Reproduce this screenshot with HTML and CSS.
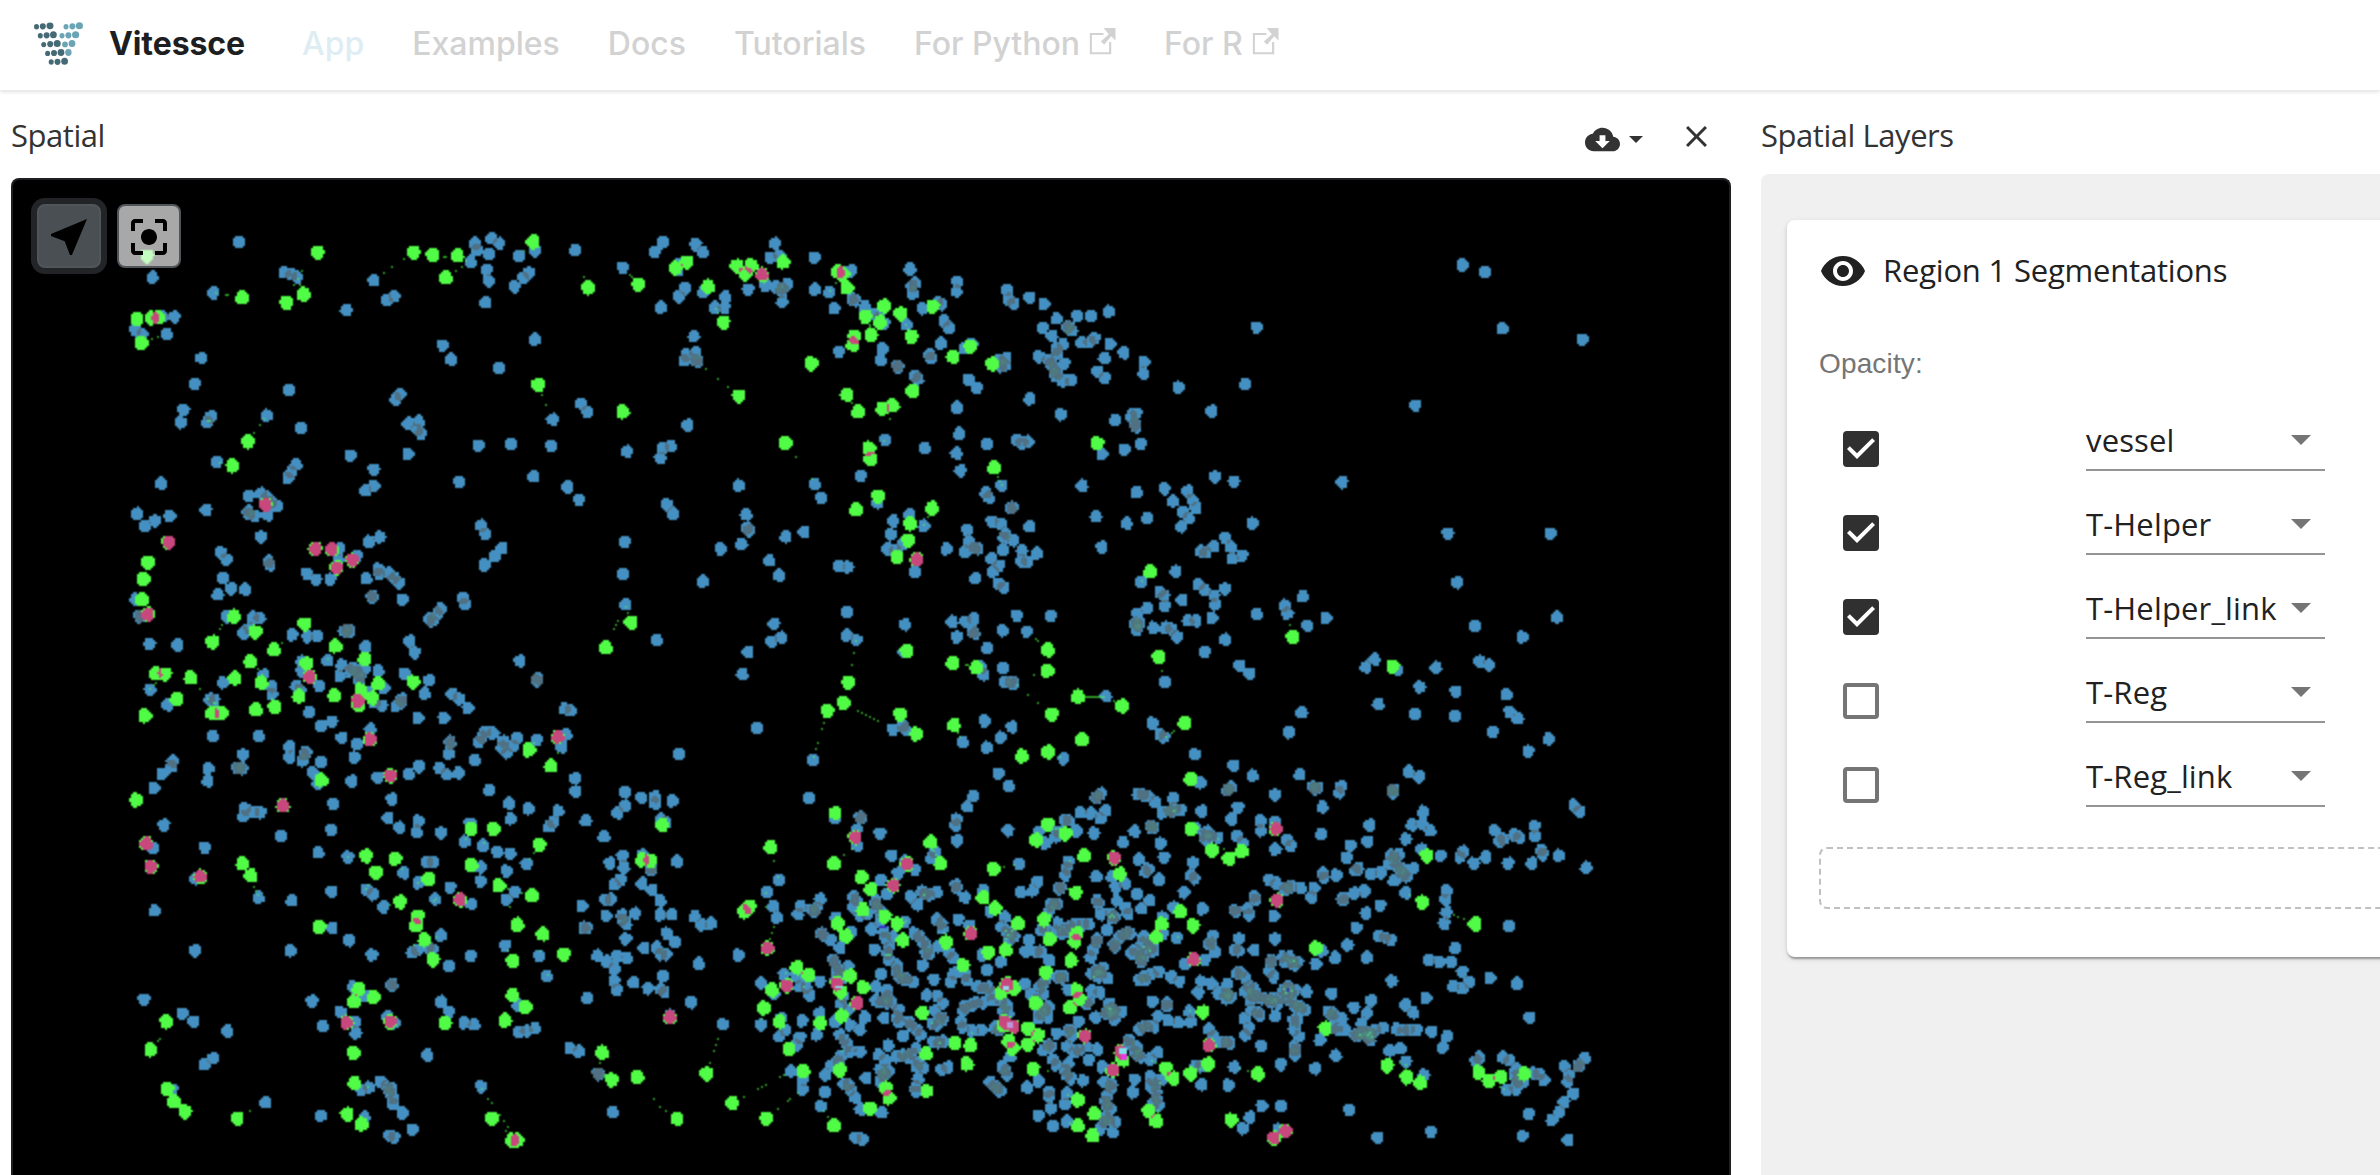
FILE: index.html
```html
<!DOCTYPE html>
<html lang="en">
<head>
<meta charset="utf-8">
<title>Vitessce</title>
<link rel="stylesheet" href="styles.css">
</head>
<body>
<header class="navbar">
  <a class="brand">
    <svg class="logo" viewBox="0 0 52 46">
      <g fill="#456a76">
        <ellipse cx="3.5" cy="5.8" rx="2.5" ry="2.7"/><ellipse cx="9.8" cy="5.3" rx="3" ry="3.1"/><ellipse cx="17" cy="4.8" rx="3.5" ry="3.4"/>
        <ellipse cx="7.3" cy="14.8" rx="2.5" ry="2.7"/><ellipse cx="13.6" cy="14.3" rx="3" ry="3.1"/><ellipse cx="20.4" cy="13.7" rx="3.4" ry="3.5"/>
        <ellipse cx="10.7" cy="23.6" rx="2.5" ry="2.7"/><ellipse cx="17.2" cy="23.1" rx="3" ry="3.1"/><ellipse cx="24.2" cy="22.6" rx="3.5" ry="3.5"/>
        <ellipse cx="14.6" cy="32.4" rx="2.5" ry="2.7"/><ellipse cx="21" cy="32" rx="3" ry="3.1"/><ellipse cx="28" cy="31.5" rx="3.4" ry="3.4"/>
        <ellipse cx="18.2" cy="41" rx="2.5" ry="2.7"/><ellipse cx="24.5" cy="40.8" rx="3" ry="3.1"/><ellipse cx="31.6" cy="40.3" rx="3.4" ry="3.5"/>
      </g>
      <g fill="#6ba5b5">
        <ellipse cx="33" cy="5.8" rx="2.5" ry="2.7"/><ellipse cx="39.4" cy="5.3" rx="3" ry="3.1"/><ellipse cx="46.4" cy="4.8" rx="3.6" ry="3.5"/>
        <ellipse cx="29" cy="14.8" rx="2.5" ry="2.7"/><ellipse cx="35.4" cy="14.3" rx="3" ry="3.1"/><ellipse cx="42.6" cy="13.7" rx="3.6" ry="3.5"/>
        <ellipse cx="32" cy="23.4" rx="2.9" ry="2.9"/><ellipse cx="39" cy="22.6" rx="3.4" ry="3.5"/><ellipse cx="35.4" cy="31.5" rx="3.2" ry="3.4"/>
      </g>
    </svg>
    <span class="brand-name">Vitessce</span>
  </a>
  <nav class="links">
    <a class="link active">App</a>
    <a class="link">Examples</a>
    <a class="link">Docs</a>
    <a class="link">Tutorials</a>
    <a class="link">For Python<svg class="external" viewBox="0 0 24 24"><path d="M13.3 4.4H1.2v19h19v-11h-1.9v9.1H3V6.2h10.3zM13.5 0H24v11.2l-3.8-3.8-6.3 7.4-2.9-2.8 7-6.4z"/></svg></a>
    <a class="link">For R<svg class="external" viewBox="0 0 24 24"><path d="M13.3 4.4H1.2v19h19v-11h-1.9v9.1H3V6.2h10.3zM13.5 0H24v11.2l-3.8-3.8-6.3 7.4-2.9-2.8 7-6.4z"/></svg></a>
  </nav>
</header>
<main class="workspace">
  <section class="spatial">
    <div class="title-bar">
      <h2 class="title">Spatial</h2>
      <div class="actions">
        <svg class="cloud" viewBox="0 0 24 24"><path d="M19.35 10.04C18.67 6.59 15.64 4 12 4 9.11 4 6.6 5.64 5.35 8.04 2.34 8.36 0 10.91 0 14c0 3.31 2.69 6 6 6h13c2.76 0 5-2.24 5-5 0-2.64-2.05-4.78-4.65-4.96zM17 13l-5 5-5-5h3V9h4v4h3z"/></svg>
        <svg class="caret" viewBox="0 0 14 7"><path d="M0 0h14L7 7z"/></svg>
        <svg class="close" viewBox="5 5 14 14"><path d="M19 6.41L17.59 5 12 10.59 6.41 5 5 6.41 10.59 12 5 17.59 6.41 19 12 13.41 17.59 19 19 17.59 13.41 12z"/></svg>
      </div>
    </div>
    <div class="viewer">
      <canvas class="scene" id="scene" width="860" height="500"></canvas>
      <div class="tools">
        <div class="tool selected"><svg viewBox="0 0 24 24"><path d="M21 3L3 10.53v.98l6.84 2.65L12.48 21h.98L21 3z"/></svg></div>
        <div class="tool"><svg viewBox="0 0 24 24"><path d="M12 8c-2.21 0-4 1.79-4 4s1.79 4 4 4 4-1.79 4-4-1.79-4-4-4zm-7 7H3v4c0 1.100.9 2 2 2h4v-2H5v-4zM5 5h4V3H5c-1.100 0-2 .9-2 2v4h2V5zm14-2h-4v2h4v4h2V5c0-1.100-.9-2-2-2zm0 16h-4v2h4c1.100 0 2-.9 2-2v-4h-2v4z"/></svg></div>
      </div>
    </div>
  </section>
  <section class="layers">
    <h2 class="title">Spatial Layers</h2>
    <div class="layers-body">
      <div class="card">
        <div class="card-head">
          <svg class="eye" viewBox="0 0 24 24"><path d="M12 4.500C7 4.500 2.730 7.610 1 12c1.730 4.390 6 7.500 11 7.500s9.270-3.110 11-7.500c-1.730-4.390-6-7.500-11-7.500zM12 17c-2.760 0-5-2.240-5-5s2.240-5 5-5 5 2.240 5 5-2.240 5-5 5zm0-8c-1.660 0-3 1.340-3 3s1.340 3 3 3 3-1.340 3-3-1.340-3-3-3z"/></svg>
          <span class="card-title">Region 1 Segmentations</span>
        </div>
        <div class="opacity">Opacity:</div>
        <div class="channels">
          <div class="channel"><span class="box checked"><svg viewBox="3 3 18 18"><path d="M10 17l-5-5 1.410-1.410L10 14.170l7.590-7.590L19 8l-9 9z"/></svg></span><div class="select">vessel<i></i></div></div>
          <div class="channel"><span class="box checked"><svg viewBox="3 3 18 18"><path d="M10 17l-5-5 1.410-1.410L10 14.170l7.590-7.590L19 8l-9 9z"/></svg></span><div class="select">T-Helper<i></i></div></div>
          <div class="channel"><span class="box checked"><svg viewBox="3 3 18 18"><path d="M10 17l-5-5 1.410-1.410L10 14.170l7.590-7.590L19 8l-9 9z"/></svg></span><div class="select">T-Helper_link<i></i></div></div>
          <div class="channel"><span class="box"></span><div class="select">T-Reg<i></i></div></div>
          <div class="channel"><span class="box"></span><div class="select">T-Reg_link<i></i></div></div>
        </div>
        <div class="drop"></div>
      </div>
    </div>
  </section>
</main>
<script src="cells.js"></script>
</body>
</html>
```
FILE: styles.css
```css
* { box-sizing: border-box; }
body { margin: 0; width: 2380px; height: 1175px; overflow: hidden; background: #fff; display: flex; flex-direction: column; }
svg { display: block; flex: none; }
.navbar { flex: none; height: 90px; display: flex; align-items: center; padding: 0 0 3px 33px; font-family: Inter, "Liberation Sans", sans-serif; font-size: 32px; box-shadow: 0 2px 4px rgba(0,0,0,.12); position: relative; }
.brand { display: flex; align-items: center; width: 245px; }
.logo { width: 52px; height: 46px; }
.brand-name { margin-left: 24px; font-weight: 700; letter-spacing: -.1px; color: #1c1e21; }
.links { display: flex; }
.link { display: flex; align-items: center; padding: 0 24px; font-weight: 500; color: #d2d2d2; white-space: nowrap; }
.link.active { color: #deedf3; }
.external { width: 28px; height: 27px; margin: -4px 0 0 8px; fill: #d2d2d2; }
.workspace { flex: 1; display: flex; gap: 30px; min-height: 0; padding-left: 11px; font-family: "Open Sans", "Noto Sans", sans-serif; }
.title { margin: 0; font-size: 31px; font-weight: 400; line-height: 82px; height: 84px; flex: none; color: #333; padding-top: 4px; letter-spacing: -.45px; white-space: nowrap; }
.spatial { width: 1720px; display: flex; flex-direction: column; }
.title-bar { height: 88px; flex: none; display: flex; justify-content: space-between; }
.actions { display: flex; align-items: center; padding: 7px 24px 0 0; fill: #333; }
.cloud { width: 35px; height: 35px; margin-top: 3px; }
.caret { width: 14px; height: 7px; margin: 4px 43px 0 9px; }
.close { width: 21px; height: 21px; margin-top: -3px; }
.viewer { flex: 1; position: relative; overflow: hidden; background: #000; border: 2px solid #1d1f22; border-bottom: 0; border-radius: 8px 8px 0 0; }
.scene { position: absolute; left: -2px; top: -2px; width: 1720px; height: 1000px; }
.tools { position: absolute; left: 24px; top: 24px; display: flex; gap: 16px; }
.tool { width: 64px; height: 64px; border: 2px solid #50555a; border-radius: 8px; background: rgba(255,255,255,.66); display: flex; align-items: center; justify-content: center; }
.tool svg { width: 48px; height: 48px; margin-top: 2px; }
.tool.selected { background: #4a4f53; box-shadow: 0 0 0 6px #232428; }
.layers { flex: 1; min-width: 0; display: flex; flex-direction: column; }
.layers-body { flex: 1; background: #f0f0f0; border-radius: 8px 0 0 0; padding: 46px 0 0 26px; }
.card { height: 737px; width: 700px; background: #fff; border-radius: 8px; padding: 27px 0 0 32px; box-shadow: 0 4px 2px -2px rgba(0,0,0,.2), 0 2px 2px rgba(0,0,0,.14), 0 2px 6px rgba(0,0,0,.12); color: #212121; display: flex; flex-direction: column; }
.card-head { height: 48px; flex: none; display: flex; align-items: center; }
.eye { width: 48px; height: 48px; fill: #212121; }
.card-title { margin: -3px 0 0 16px; font-size: 31px; letter-spacing: -.2px; white-space: nowrap; }
.opacity { margin-top: 53px; font: 28px/32px "Liberation Sans", Arial, sans-serif; letter-spacing: .15px; color: #757575; }
.channels { margin-top: 27px; }
.channel { height: 84px; display: flex; padding-left: 24px; }
.box { width: 36px; height: 36px; margin-top: 24px; border: 4px solid #757575; border-radius: 4px; }
.box.checked { border: 0; background: #303030; }
.box svg { width: 36px; height: 36px; fill: #fff; }
.select { width: 239px; height: 64px; margin-left: 207px; border-bottom: 2px solid #949494; font-size: 31px; line-height: 66px; letter-spacing: .15px; white-space: nowrap; position: relative; }
.select i { position: absolute; right: 14px; top: 28px; border: 10px solid transparent; border-top-color: #757575; border-bottom: 0; }
.drop { width: 640px; height: 62px; flex: none; margin-top: 20px; border: 2px dashed #c0c0c0; border-radius: 8px; }
```
FILE: cells.js
```js
// Cell centroids grouped by tile. at: tile origin, k: units per pixel.
// cells = segmented cells, helper = T-Helper, dense = doubly segmented T-Helper, link = link samples.
const tiles = [
{at:[100,200],k:[2.8,3],
cells:"390,126 147,232 517,217 536,224 551,232 316,279 767,241 803,301 824,289 690,331 174,350 208,350 99,391 118,402 186,402 1051,130 1056,150 1038,185 1096,114 1117,130 1090,162 1083,209 1088,243 1079,308 1173,168 1218,151 1202,219 1185,234 1161,260 1331,150 1464,202 960,436 983,478 1117,504 1218,418 284,474 265,552 529,570 234,630 226,667 311,650 300,666 467,647 562,684 840,583 829,598 863,670 892,664 889,690 899,701 862,761 702,767 767,809 767,857 744,870 1060,737 1151,732 1267,658 1347,611 1365,636 1264,738 1475,754 1213,829 1308,861 1341,899 1006,846 327,786 549,794 536,816 527,834 170,850 416,888 451,881 467,892 478,906 495,918 415,934 417,942 433,947 470,945 297,930 104,941 126,978 154,963 195,948 451,1010 339,1057 355,1078 472,1084 476,1094 344,1134 330,1184 366,1166 406,1168 100,1198 110,1249 114,1249 669,1045 667,1078 718,1068 579,1120 605,1140 645,1137 754,1025 783,1011 746,1136 779,1108 782,1122 808,1120 823,1133 836,1148 761,1187 762,1191 847,1199 1067,977 1078,1001 1126,1043 1104,1068 1077,1095 1469,1026 1465,1122 1472,1214 1017,1194 1022,1213 955,1226 945,1240 931,1262 922,1257 355,1250 428,1252 447,1254 419,1285 400,1299 139,1331 216,1335 538,1304 581,1310 609,1308 691,1291 699,1294 684,1293 744,1340 867,1323 881,1358 637,1380 565,1385 677,1395 1176,1383",
helper:"132,168 609,157 877,157 932,165 1000,167 1212,126 968,234 1367,263 1508,253 398,293 570,283 523,307 104,357 146,354 164,353 116,428 1226,555 1464,636 414,725 371,797 134,1089 122,1137 117,1197 375,1250 435,1296 315,1326 573,1272 487,1350 659,1338 742,1378 422,1385 579,1391 1487,1267 1416,1342",
dense:"463,914 192,1027 603,1047 649,1048 706,1080 663,1103 134,1243",
link:"324,279 352,285 358,285 565,213 553,238 543,255 560,255 795,218 817,201 851,177 963,171 968,171 997,213 1013,201 1025,183 1187,153 1355,231 1484,225 1489,230 145,417 162,411 1238,585 1249,615 459,656 448,675 431,699 335,789 302,660 306,662 1470,1220 1478,1239 1450,1262 1445,1275 1439,1287 342,1275 336,1287 509,1329 638,1377"},
{at:[640,200],k:[2.8,3],
cells:"65,127 41,156 156,133 175,157 377,130 365,173 391,168 489,173 590,212 110,190 106,210 126,265 110,290 59,322 178,277 238,290 209,323 236,323 303,268 351,257 381,260 398,265 413,252 398,305 397,275 489,268 531,276 543,325 594,297 601,301 629,320 656,345 671,352 684,370 746,374 756,208 769,250 762,258 765,280 888,245 886,273 791,325 833,306 845,313 852,363 865,383 842,430 811,463 815,474 930,432 908,445 1027,270 1034,298 1045,310 1091,293 1131,312 1167,356 1127,384 1154,408 1201,381 1209,392 1196,381 1225,347 1262,348 1313,335 1236,427 1272,415 1260,426 1317,432 1355,458 1300,474 1184,433 1167,447 1168,462 1118,470 1143,480 1150,492 1160,508 1188,490 1168,520 1162,525 1184,543 1208,540 1281,515 1301,534 1411,485 1410,520 151,408 131,465 124,480 154,458 158,482 161,485 557,455 679,445 674,480 721,497 722,501 770,528 778,537 920,538 942,564 1025,475 1008,480 1022,497 1012,500 1091,597 1179,643 1509,562 1330,661 1376,647 1389,641 1386,673 1389,680 1402,731 1357,749 1294,762 887,623 894,701 886,760 797,744 897,812 972,731 1055,719 1070,730 1087,725 688,720 134,676 86,738 64,744 57,774 277,857 489,852 507,894 618,828 1013,857 75,914 92,941 298,944 300,985 305,992 285,1032 227,1047 408,1011 459,996 361,1082 389,1126 177,1144 556,1098 582,1101 664,908 755,942 708,963 795,977 702,1003 735,1035 691,1047 715,1050 770,1116 859,1047 968,877 976,892 1038,924 1044,922 985,965 1010,971 1090,979 917,990 922,1024 910,1055 937,1044 945,1046 1024,1000 1019,1014 1045,1021 1016,1049 1070,1051 1112,1060 1068,1083 1085,1086 985,1077 1005,1096 988,1115 1003,1150 1019,1162 939,1134 1238,857 1277,948 1293,1041 1362,970 1421,954 1390,877 1468,866 1492,903 580,1236 375,1272 395,1313 368,1325 303,1357 47,1320 580,1306 606,1320 741,1274 738,1356 874,1265 912,1266 933,1257 932,1296 936,1300 888,1311 1055,1246 1150,1248 1016,1292 1084,1294 973,1345 956,1403 1017,1403",
helper:"131,186 100,204 271,198 312,197 295,221 401,186 191,260 233,367 553,215 568,222 580,263 683,318 631,350 672,367 729,341 646,405 760,411 820,319 601,410 596,433 480,491 277,588 580,584 611,636 679,626 708,617 763,573 925,440 877,470 986,492 407,730 641,745 646,777 1280,730 992,804 667,889 605,930 818,925 757,971 751,1022 719,1071 747,1352 876,1390 942,1403 1142,1350 1140,1412",
dense:"342,224 775,1078",
link:"346,240 348,250 212,327 217,338 185,507 218,537 246,561 548,249 534,272 746,374 751,386 643,373 643,380 595,608 700,657 683,722 437,771 482,837 1002,830 1008,843 1014,855 806,951 795,975 604,1322 599,1358 593,1394 1109,1317 1114,1323 913,1394 918,1394 1103,1424"},
{at:[1100,240],k:[2.8,3],
cells:"1016,75 1078,96 439,262 1127,265 1350,300 406,433 313,514 882,496 322,711 375,726 246,754 258,780 269,804 231,816 249,834 226,860 678,727 428,850 350,893 367,921 283,934 296,936 318,919 371,955 398,948 974,881 1261,881 1000,1027 212,995 115,1026 168,1056 180,1067 181,1098 132,1104 229,1080 276,1033 292,1049 350,1047 319,1067 323,1094 105,1122 98,1150 111,1150 103,1170 104,1155 150,1163 184,1163 200,1167 215,1190 247,1142 269,1142 314,1134 351,1199 293,1236 439,1122 517,1097 525,1120 568,1070 580,1157 633,1134 391,1278 418,1301 1279,1131 1050,1158 1182,1191 768,1258 745,1281 833,1288 941,1283 895,1341 996,1354 1062,1263 1088,1275 1138,1363 1147,1415 1170,1435 779,1392 882,1422 994,1428 1100,1476 181,1326 565,1416 530,1477 1257,1497 146,1450 168,1483 179,1491",
helper:"141,996 165,1251 540,1191 820,1279 62,1398 237,1450",
link:"117,1023 531,1155 173,1293 39,1383 185,1491 201,1479 207,1473 2,1371 8,1371"},
{at:[100,660],k:[2.8,3],
cells:"140,90 189,135 345,68 457,45 308,118 320,120 480,80 482,102 565,35 614,77 550,78 560,90 690,22 672,48 685,18 709,25 720,36 741,28 728,62 728,52 700,32 779,33 795,84 752,95 769,128 789,137 852,40 921,61 909,100 845,118 830,138 845,125 586,156 619,198 650,184 757,208 677,234 719,252 713,292 530,260 531,292 577,276 571,284 568,302 619,306 595,337 610,370 705,363 778,353 817,417 864,342 893,319 891,174 963,174 985,102 1005,116 1030,144 1225,57 1224,62 1302,146 1317,151 315,228 444,228 400,285 384,324 391,324 398,325 303,324 302,363 203,304 200,320 174,342 152,384 406,446 400,470 429,456 449,457 179,495 506,528 293,562 149,564 266,656 444,712 537,722 611,578 694,591 648,510 654,432 807,474 837,502 891,483 886,515 955,519 648,695 745,689 764,703 792,741 850,638 891,669 916,606 933,606 939,717 981,682 1040,732 1021,545 1036,490 1072,557 1113,576 1148,582 1194,612 1066,621 1066,663 1139,633 1161,695 1139,719 154,752 265,872 123,1018 534,872 649,804 697,841 761,885 874,878 888,870 920,864 931,868 955,826 977,918 1038,887 1135,856 1230,888 1251,948 818,972 818,977 594,1023 623,1098 710,980 743,1008 673,1056 715,1085 716,1119 804,1070 824,1088 955,1025 977,1055 1020,1088 1048,1094 1171,1037 1172,1115 1194,1113 1218,1105 231,1060 262,1085 356,1113 317,1195 293,1214 202,1288 463,1327 916,1185 731,1290 754,1282 785,1264 802,1280 815,1285 810,1296 821,1315 821,1332 848,1359 875,1408 740,1372 619,1367 810,1427 824,1432 1068,1280 1316,1163 1341,1174 1394,1240 1395,1243 1435,1356 1364,1015 980,245 981,250 977,280 1080,215 1070,232 1060,246 1102,220 1130,245 1125,262 1140,278 1167,234 1157,258 1223,240 1305,225 1293,261 1049,300 951,324 971,343 1005,339 1330,355 1332,396 1090,390 1145,430 1150,477 1201,446 1282,453 1269,486 1257,500 1360,482 1411,530 1469,397 1469,437 1450,458 1515,413 1428,609 1463,587 1467,622 1458,658 1440,672 1518,670 1415,718 1430,718 1349,737 1355,803 1363,804 1417,767 1462,765 1463,778 1473,792 1497,760 1472,836 1393,887 1421,905 1447,887 1476,895 1441,925 1440,962 1446,990 1495,967",
helper:"155,41 182,42 254,54 377,54 452,68 215,117 126,168 314,160 340,160 436,149 490,141 557,109 657,107 877,66 779,72 730,90 724,135 762,113 620,360 102,420 1201,270 1263,318 1103,508 1038,507 400,611 422,647 745,587 826,596 772,637 919,656 840,725 1039,616 1117,677 1210,705 1230,554 890,768 885,796 614,800 909,840 932,899 1168,794 1240,822 1298,882 1156,903 1155,1006 1191,1040 1134,1081 966,1089 724,987 767,1010 711,1025 186,1085 142,1170 711,1179 188,1287 208,1325 238,1355 384,1376 713,1270 692,1362 733,1393 1098,1376 1154,1441 1168,1441 1406,1178 1433,1259 1504,1252",
dense:"587,51 722,122 756,238 1282,231 813,347 512,437 130,551 143,620 281,650 1008,719 691,1088 813,1085",
link:"280,87 150,75 140,87 156,69 303,117 320,126 325,130 444,27 481,117 604,345 694,591 1282,279 1215,249 1204,597 1215,579 1024,537 1075,549 847,627 891,669 745,687 751,677 811,735 933,723 939,717 431,681 436,690 442,705 1143,687 1180,699 1148,741 1142,873 1232,873 1254,945 878,852 940,830 162,1143 168,1137 420,1353 751,1281 730,1370 1070,1287 1087,1317 1098,1329 1120,1365 1131,1383 1142,1401 1137,1413 1400,1209 1411,1250"},
{at:[640,660],k:[3,3],
cells:"307,43 351,204 117,282 519,300 758,208 789,198 795,207 1030,44 1090,23 1095,66 1112,67 1122,69 1398,108 1035,183 1116,201 1083,232 1040,263 968,246 1271,296 1076,341 1107,379",
helper:"626,68 611,129 563,153 781,162 829,222 1314,110 941,195 1235,162 1146,289 1224,276 1326,239",
link:"636,15 653,153 666,159 678,165 690,171 702,177 714,183 552,189 546,207 534,249 528,267 522,291 1182,45 1164,105 1194,129 1132,75 953,219 960,231 1260,291 1339,111 1345,111 1351,111 1357,111 1363,111 1369,111 1375,111 1381,111 1387,111 1393,111"},
{at:[1110,660],k:[3,3],
cells:"255,283 272,369 372,317 428,347 570,344 896,335 926,350 1149,216 1255,273 1317,236",
helper:"243,357"},
{at:[640,780],k:[3,3],
cells:"4,54 44,50 46,70 97,63 507,54 63,118 76,128 8,225 33,265 34,270 111,244 10,312 36,331 61,363 61,405 95,403 81,460 105,486 12,503 50,503 62,523 78,523 176,551 68,588 24,625 62,627 72,636 153,667 90,707 249,733 296,525 164,410 184,435 212,430 417,300 380,336 400,378 411,412 586,113 660,111 665,113 720,161 650,150 651,196 755,228 794,244 825,269 774,279 722,300 741,342 708,363 641,350 648,359 640,381 541,357 482,378 474,402 513,388 522,394 530,385 542,460 547,464 572,480 633,457 600,503 588,413 580,540 583,545 660,405 680,402 708,372 712,385 725,400 720,425 694,447 732,455 736,475 757,470 795,425 703,508 746,505 743,520 748,540 772,556 823,460 838,470 848,485 860,500 858,520 866,522 892,500 848,556 812,350 845,335 855,342 866,345 890,336 833,374 948,315 950,325 974,352 947,135 950,118 952,182 981,80 1000,48 1106,20 1104,151 1138,251 1193,306 1178,333 1142,336 886,216 875,234 1030,330 1050,395 1094,412 890,418 905,430 908,445 954,418 989,437 1083,440 1100,455 1115,460 1122,470 1108,480 928,518 940,535 1026,525 1041,570 1083,545 1167,480 1157,515 1190,515 1203,515 1229,540 1285,245 1280,265 1276,285 1262,322 1256,326 1233,375 1243,372 1252,372 1226,396 1197,155 1217,190 1245,170 1255,155 1274,120 1285,122 1311,153 1320,97 432,583 470,590 498,622 480,620 508,645 540,606 364,609 402,642 363,735 625,560 590,575 588,600 600,570 610,590 722,582 775,590 790,596 800,596 820,606 770,575 707,620 742,630 740,650 707,662 725,665 740,668 755,668 732,714 775,690 772,710 775,725 805,725 812,735 830,750 842,765 675,711 789,768 882,598 942,580 932,606 975,585 980,600 860,645 892,648 908,670 884,693 903,712 908,718 878,730 890,735 608,650 604,670 625,690 585,725 630,735 660,748 600,765 612,780 622,795 602,830 595,845 575,855 556,885 660,816 630,815 540,700 487,722 530,765 425,715 436,750 416,770 480,772 470,795 453,873 488,898 488,928 543,979 555,936 612,912 625,915 630,928 645,952 661,988 725,998 647,1072 668,1078 678,893 720,870 735,880 728,885 747,872 722,905 716,824 745,797 735,840 770,830 790,825 800,832 815,820 828,805 835,845 830,860 850,863 835,895 828,920 828,935 880,785 898,788 910,785 903,869 923,862 1012,620 1030,625 1045,622 1055,640 1060,660 1085,665 1100,675 1090,690 1104,700 975,680 995,675 1010,668 1030,668 970,690 964,725 970,742 996,752 1026,750 1065,742 1075,750 1080,745 1110,830 1088,860 1097,872 1100,885 1050,906 1062,918 1072,925 1082,932 1161,922 1197,903 1156,612 1172,640 1200,620 1210,610 1220,595 1208,640 1190,660 1205,680 1215,690 1200,700 1195,715 1222,712 1225,680 1255,590 1262,595 1270,590 1284,630 1250,760 1290,750 1295,770 1284,755 1315,725 1210,810 1225,795 1232,800 1240,840 1248,855 1280,800 1305,815 1318,810 1276,870 1285,850 1280,885 1292,895 1227,935 1228,950 1233,985 1195,1007 1239,1038 1280,1024 1275,972 1282,940 1255,430 1275,450 1270,460 1290,440 1305,432 1245,455 1215,445 1205,450",
helper:"66,134 32,241 6,240 392,202 586,99 582,250 328,380 313,395 665,291 693,328 669,389 735,409 593,431 771,431 618,469 788,480 872,186 902,251 1061,267 1223,132 1277,161 1188,180 1307,339 1029,353 1066,384 1134,430 1212,418 1229,477 1310,461 1304,485 919,486 1046,517 1097,510 969,556 1293,541 1217,576 471,563 506,586 395,630 372,684 418,725 540,729 446,807 605,708 630,588 602,636 669,622 846,700 945,788 992,797 858,822 981,852 1187,670 1310,630 1318,658 1290,683 1090,735 1165,745 1195,766 1163,794 1107,783 1119,805 1122,625 1083,638 1179,866 490,873 599,870 738,924 747,954 860,933 690,986 582,1035 380,1015 276,970 199,881 112,1017 1314,960 1314,1038",
dense:"645,172 801,252 760,317 383,504 440,617 590,610 651,669 992,460 90,712 1100,612 1095,725 1120,740",
link:"402,243 414,291 378,339 378,381 612,225 637,207 402,440 396,459 390,477 234,777 228,795 222,813 210,849 432,885 420,891 378,915 366,921 354,927 312,951 450,957 444,963 414,987 474,937 551,992 564,1011 42,957 60,981 77,992 1092,261 1122,255 882,213 888,225 797,423 911,459 1098,453 1104,465 1116,453 1098,474 437,579 492,621 365,717 606,810 740,525 746,525 752,525 876,729 996,759 898,786 1222,873 1284,945 1289,1028 1290,243 1248,147 850,342 1284,327"},
{at:[1080,780],k:[2.904,3],
cells:"5,97 33,100 59,115 75,90 50,50 60,40 46,54 40,160 158,154 125,187 172,238 47,288 92,290 130,310 104,322 165,342 202,362 190,275 198,268 229,299 245,232 235,190 207,138 214,143 208,142 50,362 54,370 108,362 134,385 139,402 178,385 60,403 90,400 95,415 100,410 168,43 183,43 197,48 218,66 270,55 240,98 262,92 275,85 292,90 265,95 353,93 350,10 427,30 438,22 432,28 459,82 439,117 566,45 704,81 335,145 360,165 370,155 380,168 365,180 400,172 456,168 472,190 525,123 526,152 565,125 600,180 612,198 568,208 701,162 758,20 752,38 675,20 690,22 682,25 909,28 908,38 908,32 997,95 964,135 994,132 1017,152 946,177 842,136 835,184 786,196 774,232 992,208 1047,228 1103,231 1113,215 1143,250 1178,232 1204,150 1218,184 1230,178 1260,165 1275,173 1320,139 1321,168 1340,210 1343,223 1312,250 1391,227 1470,263 1434,76 1450,94 1244,250 328,249 323,285 332,295 302,337 271,382 355,387 549,299 570,310 603,322 595,328 613,320 641,324 680,325 671,352 705,280 709,292 745,285 800,272 808,263 845,282 873,278 904,225 912,232 925,222 896,250 918,258 930,262 932,275 940,285 967,265 912,302 948,290 946,339 1064,333 1061,360 1064,398 1058,430 1245,438 762,354 765,360 796,340 827,333 872,376 831,400 802,444 506,350 510,360 487,385 490,405 449,390 452,394 563,409 867,468 885,472 902,478 777,495 742,533 834,532 703,513 685,552 567,477 461,477 449,510 462,512 505,510 386,467 375,492 380,490 392,516 362,540 304,552 281,474 10,433 25,433 78,450 125,463 135,458 112,475 145,460 98,495 102,500 185,470 180,490 200,490 210,500 160,510 150,520 175,525 190,520 212,515 178,545 180,540 50,478 48,485 38,510 30,532 240,412 240,460 35,580 50,570 62,578 52,590 80,595 65,565 555,540 555,545 590,530 605,530 595,545 620,545 632,545 622,555 550,572 562,590 455,580 465,578 480,595 905,603 1090,504 1014,540 1044,546 1079,546 1110,575 1131,606 1085,618 1110,625 1190,594 1269,611 1306,713 1005,654 945,675 968,699 795,682 846,662 833,698 731,641 657,635 229,574 210,582 185,590 172,598 190,600 265,590 288,604 352,604 383,611 343,638 428,612 400,638 425,640 430,645 422,655 440,650 490,620 505,625 480,635 500,645 515,650 495,660 530,655 545,660 560,655 555,668 580,655 575,670 600,655 615,665 590,630 602,625 612,640 605,620 625,630 625,680 640,685 635,678 655,690 498,690 515,698 522,705 478,715 490,745 480,765 568,708 620,720 630,722 622,748 637,770 622,800 625,810 625,825 210,665 252,670 252,678 318,694 322,725 226,710 215,740 195,740 185,740 172,748 258,722 286,728 35,632 58,638 25,665 20,672 85,670 90,685 75,700 80,695 95,705 100,690 120,695 100,718 45,712 375,748 385,770 412,787 425,788 435,788 526,797 720,695 735,700 732,708 760,715 735,745 745,748 770,750 697,779 819,730 800,765 815,760 805,768 830,755 845,765 840,760 835,772 858,750 842,780 880,743 919,747 940,750 955,750 978,750 1021,755 1066,768 1054,802 898,812 931,806 947,845 998,885 743,827 583,853 448,861 683,865 430,916 782,990 864,1072 1019,1055 1285,1068 1303,1002 1417,1080 1370,1020 1393,995 1406,967 1434,942 1150,843 1160,833 1228,832 1247,840 1265,868 1262,890 1270,905 1285,905 1280,885 1315,880 1333,882 1347,900 1240,930 1265,928 1407,858 1447,855 1448,860 1466,834 1421,885 1416,905 20,800 50,808 25,840 10,902 65,860 143,780 140,790 165,800 168,825 175,830 205,838 226,817 160,815 335,858 350,860 352,914 203,890 205,915 220,915 235,900 220,935 223,955 215,970 230,975 160,898 153,937 70,905 92,912 90,922 78,945 75,965 78,975 88,985 75,1010 70,1025 85,1020 102,1025 60,1045 95,1055 493,1012 473,1045 528,978 584,978 576,1048",
helper:"12,228 322,6 323,147 383,211 432,235 470,213 1007,227 995,366 1147,432 115,282 292,395 237,432 328,437 221,470 685,504 357,696 712,744 516,882 892,857 949,892 988,908 1158,876 1188,903 1222,890 1291,882 372,852 321,882 249,866 270,894 200,993 221,1023 439,1020 42,1000 37,1067 124,840",
dense:"100,234 569,147 571,361 330,538 14,768 375,796 95,870 563,1074 597,1053 118,815",
link:"418,207 401,178 958,345 1086,405 1097,410 1114,417 284,471 272,93 88,411 93,405 98,411 187,501 204,513 620,543 319,692 815,765 835,765 842,760 848,768 463,865 488,873 208,843 220,849 232,909 228,990 228,997 346,865 352,858 930,849 947,855 947,865 947,873 1220,921 1230,928 1248,897 42,590 85,686 595,625 605,635 613,632 598,640"}
];
const OX = 11, OY = 178, W = 860, H = 500;
const blue = new Uint8Array(W * H), green = new Uint8Array(W * H), dots = new Uint8Array(W * H);

// Stamp one rounded, slightly irregular cell; the outline depends on the position only.
function stamp(layer, x, y, r) {
  const s = Math.abs(Math.sin(x * 12.9 + y * 78.2) * 437) % 1;
  const x0 = Math.round(x), y0 = Math.round(y);
  for (let j = -5; j <= 4; j++) for (let i = -5; i <= 4; i++) {
    const dx = x0 + i + .5 - x, dy = y0 + j + .5 - y;
    const a = Math.atan2(dy, dx);
    if (Math.hypot(dx * 1.04, dy * .98) > r + .2 * Math.sin(3 * a + s * 6.3)) continue;
    const px = x0 + i, py = y0 + j;
    if (px >= 0 && py >= 0 && px < W && py < H) layer[py * W + px]++;
  }
}
const points = text => (text || "").split(" ").filter(Boolean).map(p => p.split(",").map(Number));

// Tiles share their borders: a cell already placed by a neighbouring tile is skipped.
const placed = { cells: [], helper: [], dense: [] };
tiles.forEach((t, index) => {
  const place = ([x, y]) => [(t.at[0] + x / t.k[0] - OX) / 2, (t.at[1] + y / t.k[1] - OY) / 2];
  const each = (kind, draw) => {
    for (const p of points(t[kind])) {
      const [x, y] = place(p);
      if (placed[kind].some(q => q[2] !== index && Math.hypot(q[0] - x, q[1] - y) < 2.6)) continue;
      placed[kind].push([x, y, index]);
      draw(x, y);
    }
  };
  each("cells", (x, y) => stamp(blue, x, y, 3.2));
  each("helper", (x, y) => stamp(green, x, y, 3.6));
  each("dense", (x, y) => { stamp(green, x, y, 3.65); stamp(green, x, y, 3.3); });
  for (const p of points(t.link)) { const [x, y] = place(p); dots[Math.floor(y) * W + Math.floor(x)] = 1; }
});
// Extra object classes where several segmentations coincide
const extra = [[1119,1049,4,3,[130,225,235]],[1121,1055,3,3,[230,60,225]],[880,926,4,1,[52,38,190]],[835,987,4,1,[130,225,235]],[1004,987,3,2,[150,215,235]],[1007,1022,3,3,[190,150,220]],[1287,988,1,2,[52,38,190]]];
const ctx = document.getElementById("scene").getContext("2d");
const img = ctx.createImageData(W, H);
const B = [[0,0,0],[69,144,194],[80,113,131],[78,122,126],[80,135,130]];
const G = [null,[80,252,70],[200,72,125],[200,72,125],[200,72,125]];
for (let n = 0; n < W * H; n++) {
  let c = B[Math.min(blue[n], 4)];
  if (green[n]) c = G[Math.min(green[n], 4)];
  else if (dots[n]) c = blue[n] ? [75,205,130] : [50,165,42];
  img.data.set([c[0], c[1], c[2], blue[n] || green[n] || dots[n] ? 255 : 0], n * 4);
}
for (const [x, y, w, h, c] of extra) {
  const gx = (x - OX) >> 1, gy = (y - OY) >> 1;
  for (let j = 0; j < h; j++) for (let i = 0; i < w; i++) img.data.set([...c, 255], ((gy + j) * W + gx + i) * 4);
}
ctx.putImageData(img, 0, 0);
```
